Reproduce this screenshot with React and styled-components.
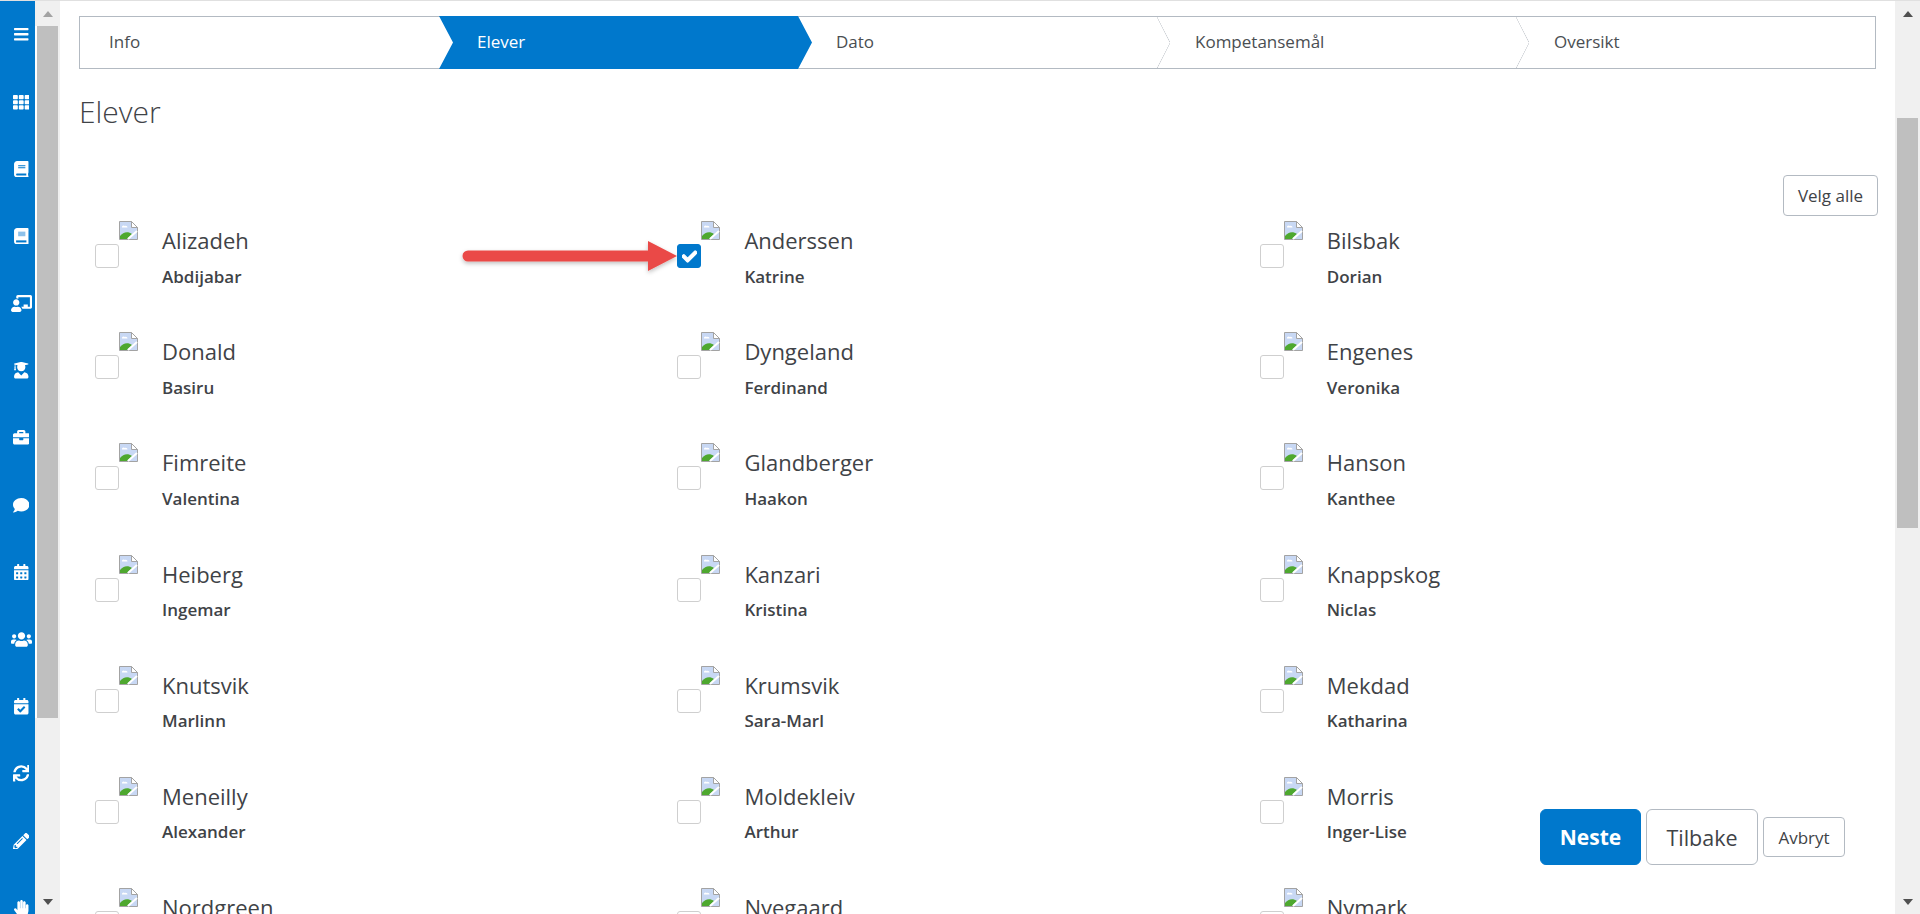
import React from 'react';
import styled, { createGlobalStyle } from 'styled-components';
import {
  FaBars,
  FaTh,
  FaBook,
  FaChalkboardTeacher,
  FaUserGraduate,
  FaBriefcase,
  FaComment,
  FaCalendarAlt,
  FaUsers,
  FaCalendarCheck,
  FaSync,
  FaPencilAlt,
  FaHandPaper,
  FaCheck
} from 'react-icons/fa';

const GlobalStyle = createGlobalStyle`
  html, body {
    margin: 0;
    height: 100%;
    overflow: hidden;
    background: #fff;
  }
  * {
    box-sizing: border-box;
  }
`;

const BLUE = '#0078cc';
const TEXT = '#3f4347';
const BORDER = '#b3bac2';
const CHEVRON = '#c9cdd2';

const Page = styled.div`
  display: flex;
  width: 1920px;
  height: 914px;
  overflow: hidden;
  position: relative;
  font-family: "Open Sans", "Liberation Sans", sans-serif;
  color: ${TEXT};
  border-top: 1px solid #e0e0e0;
`;

const Sidebar = styled.nav`
  width: 35px;
  flex: none;
  padding-left: 7px;
  background: ${BLUE};
  display: flex;
  flex-direction: column;
  align-items: center;
`;

const NavItem = styled.div`
  height: 67.2px;
  flex: none;
  display: flex;
  align-items: center;
  justify-content: center;
  color: #fff;

  svg {
    flex: none;
    width: ${props => (props.$wide ? 21 : 16.5)}px;
    height: ${props => (props.$wide ? 17 : 16.5)}px;
  }
`;

const ScrollTrack = styled.div`
  width: 25px;
  flex: none;
  height: 913px;
  background: #f0f0f0;
  display: flex;
  flex-direction: column;
  align-items: flex-start;
  padding-left: 2px;
`;

const ScrollArrow = styled.div`
  height: 25px;
  width: 21px;
  flex: none;
  display: flex;
  align-items: center;
  justify-content: center;
`;

const ArrowGlyph = styled.div`
  width: 0;
  height: 0;
  border-left: 5.5px solid transparent;
  border-right: 5.5px solid transparent;
  ${props => props.$up
    ? `border-bottom: 6px solid ${props.$color};`
    : `border-top: 6px solid ${props.$color};`}
`;

const ScrollThumb = styled.div`
  width: 21px;
  flex: none;
  height: ${props => props.$h}px;
  margin-top: ${props => props.$top}px;
  background: #bfbfbf;
  box-shadow: ${props => (props.$edge ? '-2px 0 0 #fff' : 'none')};
`;

const ScrollSpace = styled.div`
  flex: 1;
`;

const Main = styled.main`
  flex: 1;
  min-width: 0;
  height: 913px;
  overflow: hidden;
  padding: 15px 19px 0 19px;
`;

const Steps = styled.div`
  display: grid;
  grid-template-columns: repeat(5, 1fr);
  height: 53px;
  border: 1px solid ${BORDER};
`;

const Step = styled.div`
  position: relative;
  display: flex;
  align-items: center;
  padding-left: ${props => (props.$first ? 29 : 38)}px;
  padding-bottom: 2px;
  font-size: 17px;
  color: ${props => (props.$active ? '#fff' : '#4a4e52')};
  ${props => props.$divider && `
    &::before {
      content: '';
      position: absolute;
      left: 0;
      top: 0;
      width: 13px;
      height: 100%;
      background:
        linear-gradient(to top right, transparent calc(50% - 0.6px), ${CHEVRON} 50%, transparent calc(50% + 0.6px)) top / 100% 50% no-repeat,
        linear-gradient(to bottom right, transparent calc(50% - 0.6px), ${CHEVRON} 50%, transparent calc(50% + 0.6px)) bottom / 100% 50% no-repeat;
    }
  `}
`;

const ActiveShape = styled.div`
  position: absolute;
  top: -1px;
  bottom: -1px;
  left: 0;
  right: -14px;
  background: ${BLUE};
  clip-path: polygon(0 0, calc(100% - 14px) 0, 100% 50%, calc(100% - 14px) 100%, 0 100%, 14px 50%);
`;

const StepLabel = styled.span`
  position: relative;
`;

const Title = styled.h1`
  margin: 23px 0 0;
  font-size: 30px;
  line-height: 40px;
  font-weight: 300;
  color: #3f4347;
`;

const Toolbar = styled.div`
  display: flex;
  justify-content: flex-end;
  margin: 43px -2px 0 0;
  height: 41px;
`;

const SelectAll = styled.button`
  width: 95px;
  height: 41px;
  padding: 0;
  border: 1px solid ${BORDER};
  border-radius: 4px;
  background: #fff;
  font: 17px "Open Sans", sans-serif;
  color: ${TEXT};
`;

const StudentGrid = styled.div`
  display: grid;
  grid-template-columns: repeat(3, 582.4px);
  grid-auto-rows: 111.2px;
  margin-top: 5px;
  padding-left: 16px;
`;

const Student = styled.div`
  display: flex;
  align-items: flex-start;
`;

const Check = styled.div`
  width: 24px;
  height: 24px;
  flex: none;
  margin-top: 23px;
  border: 1px solid ${props => (props.$checked ? BLUE : '#cfcfcf')};
  border-radius: 3px;
  background: ${props => (props.$checked ? BLUE : '#fff')};
  color: #fff;
  font-size: 15px;
  display: flex;
  align-items: center;
  justify-content: center;

  svg {
    stroke: currentColor;
    stroke-width: 40px;
  }
`;

const Broken = styled.svg`
  width: 19px;
  height: 19px;
  flex: none;
  display: block;
`;

const Names = styled.div`
  margin-left: 24px;
  margin-top: 4px;
`;

const LastName = styled.div`
  font-size: 22px;
  line-height: 30px;
`;

const FirstName = styled.div`
  font-size: 17px;
  font-weight: 600;
  line-height: 23px;
  margin-top: 9.5px;
`;

const ArrowMark = styled.svg`
  position: absolute;
  left: 462px;
  top: 235px;
  overflow: visible;
`;

const Actions = styled.div`
  position: absolute;
  left: 1540px;
  top: 808px;
  height: 56px;
  display: flex;
  align-items: center;
  gap: 5px;
`;

const ActionButton = styled.button`
  height: ${props => (props.$small ? 40 : 56)}px;
  width: ${props => props.$w}px;
  padding: 0;
  border-radius: ${props => (props.$small ? 4 : 6)}px;
  border: 1px solid ${props => (props.$primary ? BLUE : BORDER)};
  background: ${props => (props.$primary ? BLUE : '#fff')};
  color: ${props => (props.$primary ? '#fff' : TEXT)};
  font-family: "Open Sans", sans-serif;
  font-size: ${props => props.$size}px;
  font-weight: ${props => (props.$primary ? 700 : 400)};
`;

const PaleBook = () => (
  <svg viewBox="0 0 14 16">
    <path d="M3 0h10.300c.4 0 .7.300.7.700V15.300c0 .4-.3.700-.7.700H3c-1.700 0-3-1.300-3-3V3c0-1.700 1.300-3 3-3z" fill="#fff" />
    <path d="M4 3.500h7V8H4z" fill="#8dc1ea" />
    <path d="M2 12h10v2H2z" fill={BLUE} />
  </svg>
);

const navIcons = [
  [FaBars],
  [FaTh],
  [FaBook],
  [PaleBook],
  [FaChalkboardTeacher, true],
  [FaUserGraduate],
  [FaBriefcase],
  [FaComment],
  [FaCalendarAlt],
  [FaUsers, true],
  [FaCalendarCheck],
  [FaSync],
  [FaPencilAlt],
  [FaHandPaper]
];

const steps = ['Info', 'Elever', 'Dato', 'Kompetansemål', 'Oversikt'];

const students = [
  ['Alizadeh', 'Abdijabar'],
  ['Anderssen', 'Katrine', true],
  ['Bilsbak', 'Dorian'],
  ['Donald', 'Basiru'],
  ['Dyngeland', 'Ferdinand'],
  ['Engenes', 'Veronika'],
  ['Fimreite', 'Valentina'],
  ['Glandberger', 'Haakon'],
  ['Hanson', 'Kanthee'],
  ['Heiberg', 'Ingemar'],
  ['Kanzari', 'Kristina'],
  ['Knappskog', 'Niclas'],
  ['Knutsvik', 'Marlinn'],
  ['Krumsvik', 'Sara-Marl'],
  ['Mekdad', 'Katharina'],
  ['Meneilly', 'Alexander'],
  ['Moldekleiv', 'Arthur'],
  ['Morris', 'Inger-Lise'],
  ['Nordgreen', ''],
  ['Nyegaard', ''],
  ['Nymark', '']
];

const BrokenImage = () => (
  <Broken viewBox="0 0 19 19">
    <path d="M.5.5h12l6 6v12H.5z" fill="#c8d8f4" stroke="#a3a3a3" />
    <path d="M12.500.5v6h6z" fill="#fff" stroke="#a3a3a3" />
    <path d="M3 5.500c1-1.500 2-1 3-.5 1.500-.5 2.500.5 2.500 1.500H3z" fill="#fff" />
    <path d="M1 18v-3c3-4 8-5 12-2l-5 5z" fill="#4ea82f" />
    <path d="M9 18l9-8" stroke="#fff" strokeWidth="2" />
    <path d="M14 18l4-4v4z" fill="#c8d8f4" />
  </Broken>
);

const ScrollBar = ({ thumb, top, light }) => (
  <ScrollTrack>
    <ScrollArrow>
      <ArrowGlyph $up $color={light ? '#a3a3a3' : '#505050'} />
    </ScrollArrow>
    <ScrollThumb $h={thumb} $top={top} $edge={light} />
    <ScrollSpace />
    <ScrollArrow>
      <ArrowGlyph $color="#505050" />
    </ScrollArrow>
  </ScrollTrack>
);

const App = () => (
  <Page>
    <GlobalStyle />
    <Sidebar>
      {navIcons.map(([Icon, wide], i) => (
        <NavItem key={i} $wide={wide}>
          <Icon />
        </NavItem>
      ))}
    </Sidebar>
    <ScrollBar thumb={692} top={0} light />
    <Main>
      <Steps>
        {steps.map((step, i) => (
          <Step key={step} $first={i === 0} $active={i === 1} $divider={i > 2}>
            {i === 1 && <ActiveShape />}
            <StepLabel>{step}</StepLabel>
          </Step>
        ))}
      </Steps>
      <Title>Elever</Title>
      <Toolbar>
        <SelectAll>Velg alle</SelectAll>
      </Toolbar>
      <StudentGrid>
        {students.map(([last, first, checked]) => (
          <Student key={last}>
            <Check $checked={checked}>{checked && <FaCheck />}</Check>
            <BrokenImage />
            <Names>
              <LastName>{last}</LastName>
              <FirstName>{first}</FirstName>
            </Names>
          </Student>
        ))}
      </StudentGrid>
    </Main>
    <ScrollBar thumb={410} top={92} />
    <ArrowMark width="215" height="36" viewBox="0 0 215 36">
      <defs>
        <filter id="arrow-shadow" x="-5%" y="-30%" width="110%" height="170%">
          <feDropShadow dx="0" dy="2" stdDeviation="2" floodColor="#000" floodOpacity="0.25" />
        </filter>
      </defs>
      <path d="M6 14.500h180V5l29 15-29 15v-9.500H6a5.500 5.500 0 0 1 0-11z" fill="#ea4a47" filter="url(#arrow-shadow)" />
    </ArrowMark>
    <Actions>
      <ActionButton $primary $w={101} $size={21}>Neste</ActionButton>
      <ActionButton $w={112} $size={21.5}>Tilbake</ActionButton>
      <ActionButton $small $w={82} $size={17}>Avbryt</ActionButton>
    </Actions>
  </Page>
);

export default App;
